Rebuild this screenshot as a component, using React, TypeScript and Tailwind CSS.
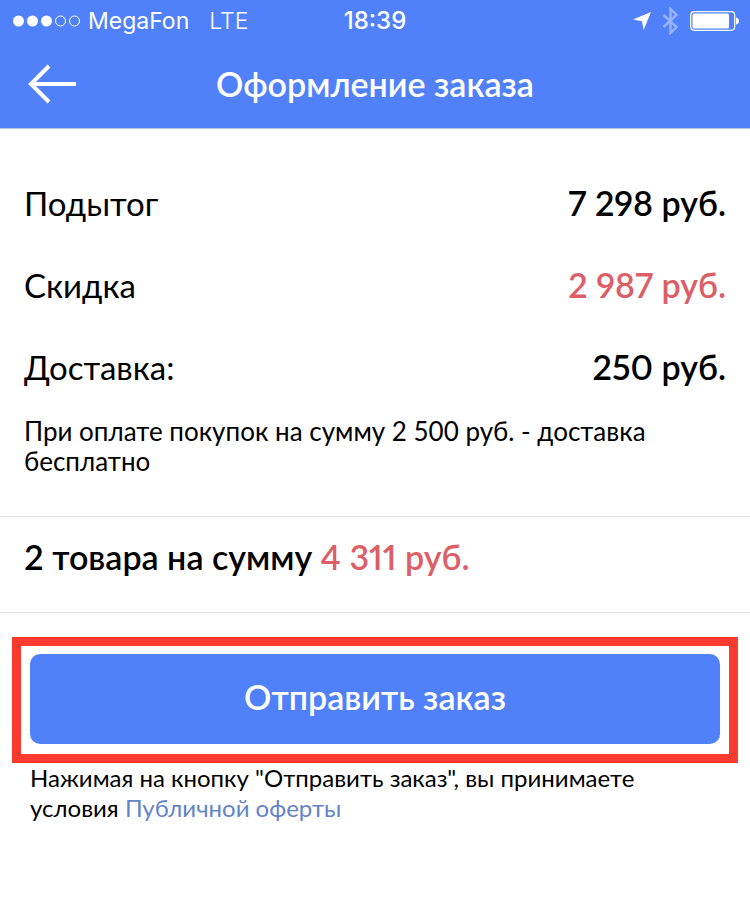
const rows = [
  { label: 'Подытог', value: '7 298 руб.', color: 'text-black' },
  { label: 'Скидка', value: '2 987 руб.', color: 'text-[#dc5e66]' },
  { label: 'Доставка:', value: '250 руб.', color: 'text-black' },
]

const signal = [true, true, true, false, false]

function StatusBar() {
  return (
    <div className="grid h-10 grid-cols-[1fr_auto_1fr] items-center px-2.5 pt-px font-['Inter',sans-serif] text-[23px] leading-10">
      <div className="flex items-center pl-0.5">
        <svg width="70" height="14" viewBox="0 0 70 14" aria-hidden="true">
          {signal.map((on, i) => (
            <circle
              key={i}
              cx={6.5 + i * 14}
              cy="7"
              r={on ? 5.5 : 5}
              fill={on ? 'white' : 'none'}
              stroke={on ? 'none' : 'white'}
            />
          ))}
        </svg>
        <span className="ml-1.5">MegaFon</span>
        <span className="ml-5 font-light">LTE</span>
      </div>

      <span className="text-[24px] font-medium">18:39</span>

      <div className="flex items-center justify-end">
        <svg width="20" height="20" viewBox="0 0 20 20" fill="white" aria-hidden="true">
          <path d="M19 1 11.6 19 10 10.2 1 8.6z" />
        </svg>
        <svg
          className="ml-2.5 opacity-40"
          width="18"
          height="28"
          viewBox="0 0 18 28"
          fill="none"
          stroke="white"
          strokeWidth="2.4"
          aria-hidden="true"
        >
          <path d="M1.5 8l13 12-6 6V2l6 6-13 12" />
        </svg>
        <svg className="ml-2.5" width="50" height="20" viewBox="0 0 50 20" fill="none" aria-hidden="true">
          <rect x="0.7" y="0.7" width="44" height="18.6" rx="3.5" stroke="white" strokeWidth="1.2" />
          <rect x="2.5" y="2.5" width="36.5" height="15" rx="1.5" fill="white" />
          <path d="M46 6.5q3 .6 3 3.5t-3 3.5z" fill="white" />
        </svg>
      </div>
    </div>
  )
}

export default function App() {
  return (
    <div className="min-h-screen bg-white font-['Lato','Open_Sans',sans-serif] text-black">
      <header className="border-b border-[#b9c3df] bg-[#5081fb] text-white">
        <StatusBar />

        <div className="grid h-[88px] grid-cols-[1fr_auto_1fr] items-center px-7">
          <button type="button" aria-label="Назад" className="justify-self-start">
            <svg width="48" height="40" viewBox="0 0 48 40" fill="none" stroke="white" strokeWidth="4">
              <path d="M21 2 3 20l18 18M3 20h45" />
            </svg>
          </button>
          <h1 className="text-[34px] leading-10 font-semibold">Оформление заказа</h1>
        </div>
      </header>

      <main>
        {/* Price breakdown */}
        <section className="border-b border-[#e5e5e5] px-6 pt-[33px] pb-10">
          <dl>
            {rows.map((row) => (
              <div key={row.label} className="flex h-[82px] items-center justify-between leading-10">
                <dt className="text-[33px]">{row.label}</dt>
                <dd className={`text-[34px] font-semibold proportional-nums ${row.color}`}>{row.value}</dd>
              </div>
            ))}
          </dl>
          <p className="mt-2 text-[26px] leading-[30px]">
            При оплате покупок на сумму 2 500 руб. - доставка бесплатно
          </p>
        </section>

        {/* Total */}
        <section className="border-b border-[#e5e5e5] px-6 pt-5 pb-[35px]">
          <p className="text-[34px] leading-10 font-semibold">
            2 товара на сумму <span className="proportional-nums text-[#dc5e66]">4 311 руб.</span>
          </p>
        </section>

        {/* Submit */}
        <section className="px-3 pt-6">
          <div className="border-[9px] border-[#fb3b30] px-[9px] pt-2 pb-2.5">
            <button
              type="button"
              className="h-[90px] w-full rounded-[10px] bg-[#5081fb] pb-1 text-[34px] leading-10 font-semibold text-white"
            >
              Отправить заказ
            </button>
          </div>
          <p className="px-[18px] text-[24px] leading-[30px]">
            Нажимая на кнопку "Отправить заказ", вы принимаете условия{' '}
            <a href="#" className="text-[#6484c8]">Публичной оферты</a>
          </p>
        </section>
      </main>
    </div>
  )
}
